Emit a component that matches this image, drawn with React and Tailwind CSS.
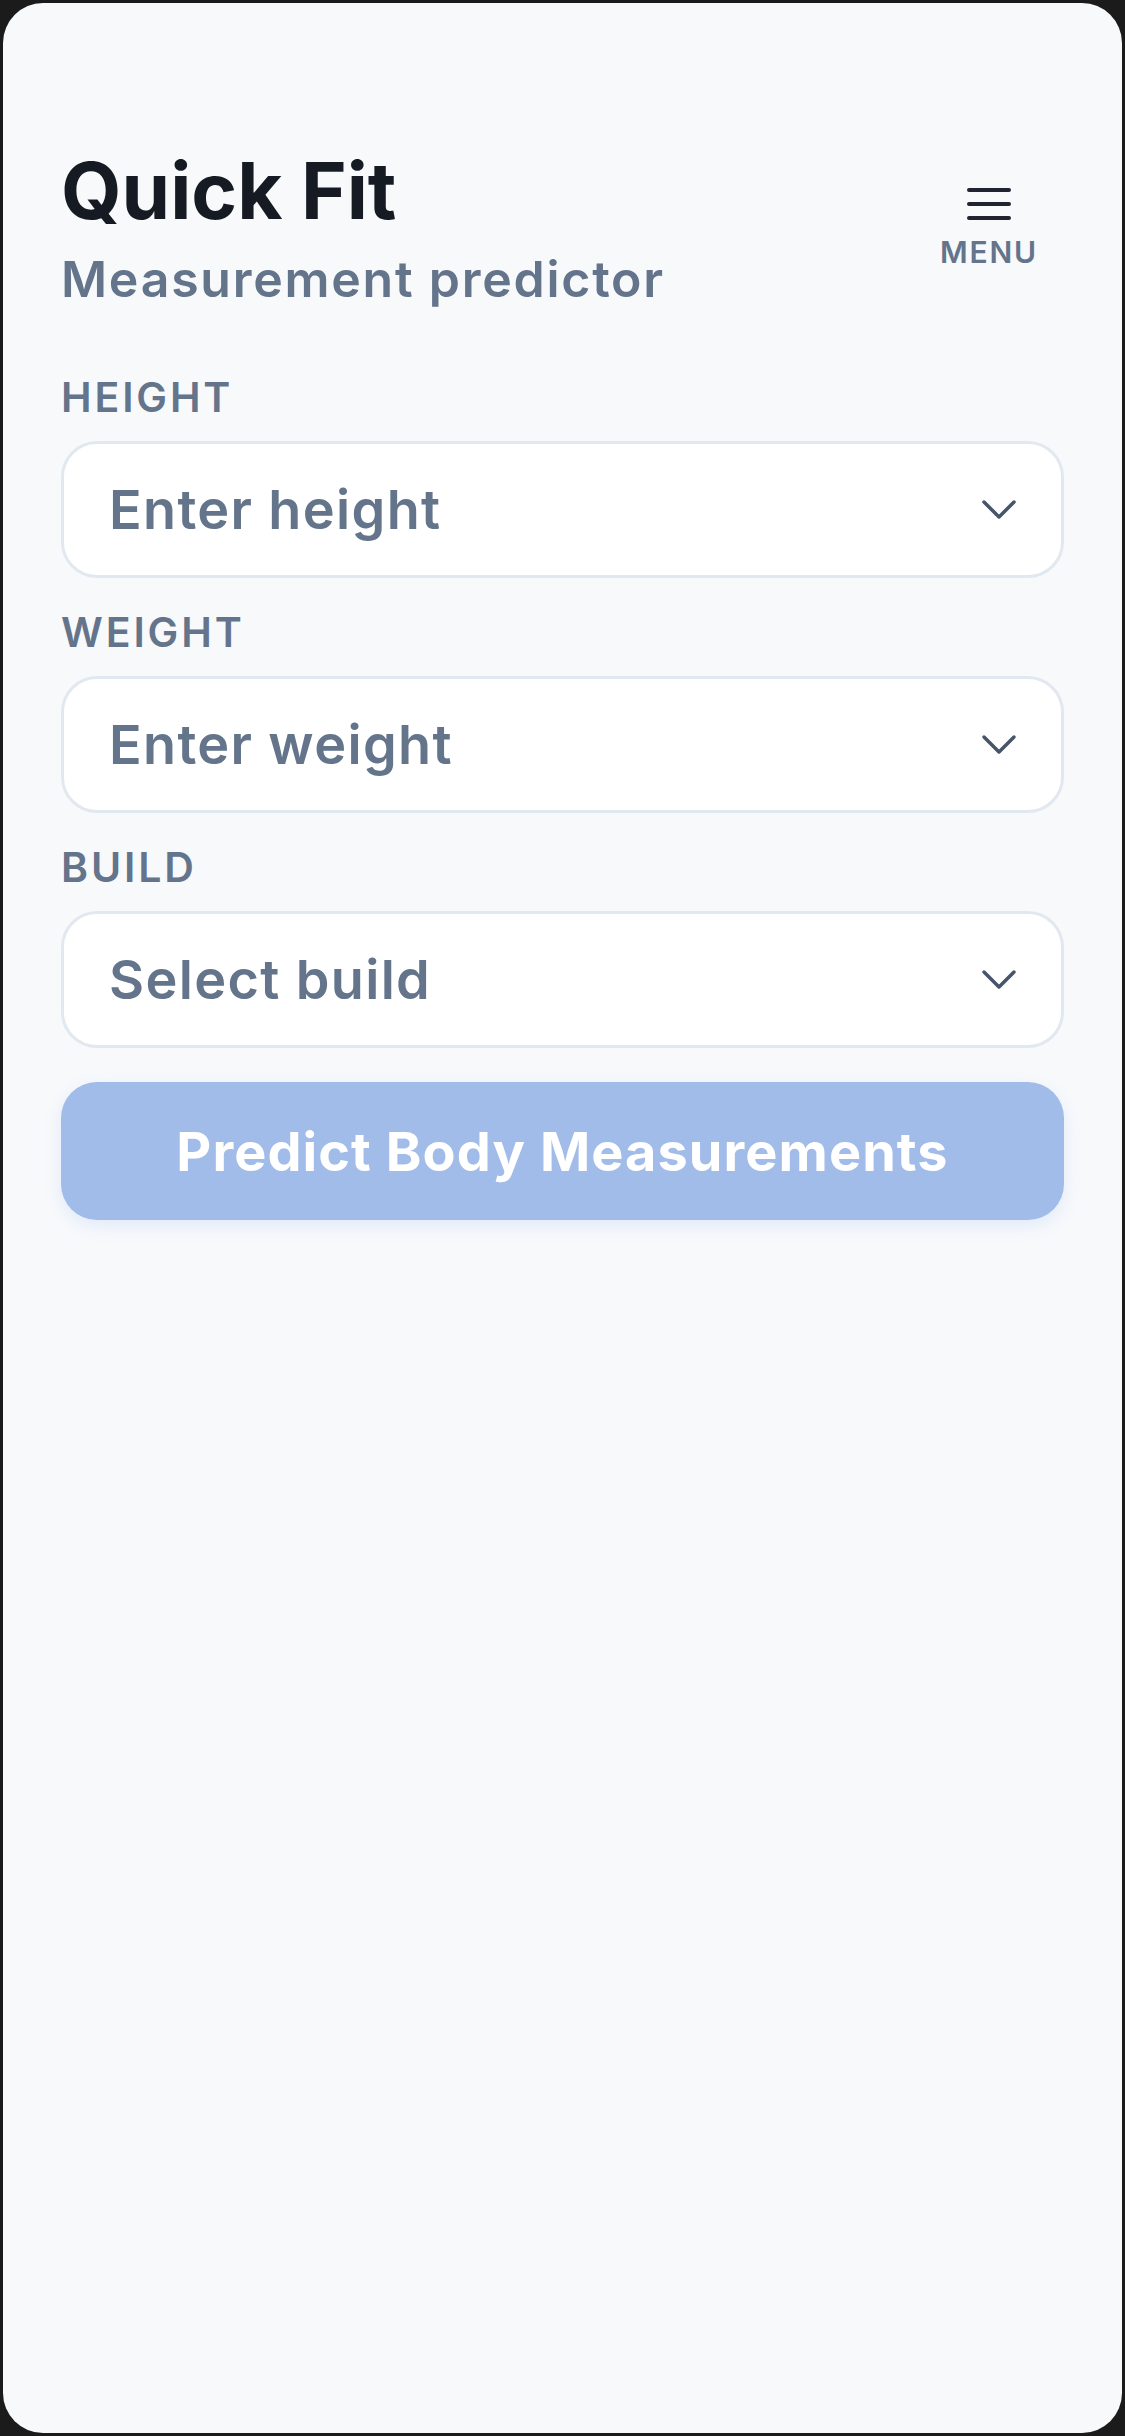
import React from "react";

const fields = [
  { label: "HEIGHT", placeholder: "Enter height" },
  { label: "WEIGHT", placeholder: "Enter weight" },
  { label: "BUILD", placeholder: "Select build" },
];

function Chevron() {
  return (
    <svg width="36" height="22" viewBox="0 0 36 22" fill="none" className="shrink-0">
      <path d="M3 3l15 15L33 3" stroke="#475569" strokeWidth="3.5" strokeLinecap="round" strokeLinejoin="round" />
    </svg>
  );
}

function MenuButton() {
  return (
    <button className="flex flex-col items-center mt-[34px] mr-[26px]">
      <svg width="46" height="36" viewBox="0 0 46 36" fill="none">
        <path d="M3 4h40M3 18h40M3 32h40" stroke="#1f2430" strokeWidth="4" strokeLinecap="round" />
      </svg>
      <span className="mt-[15px] text-[30px] leading-none font-semibold tracking-[0.06em] text-[#64748b]">MENU</span>
    </button>
  );
}

function SelectField({ label, placeholder }) {
  return (
    <div className="flex flex-col">
      <label className="text-[41px] leading-none font-semibold tracking-[0.07em] text-[#64748b]">{label}</label>
      <div className="mt-[23px] h-[137px] flex items-center justify-between bg-white border-[3px] border-[#e2e8f0] rounded-[36px] pl-[45px] pr-[44px]">
        <span className="text-[54px] font-semibold tracking-[0.025em] text-[#64748b]">{placeholder}</span>
        <Chevron />
      </div>
    </div>
  );
}

export default function App() {
  return (
    <div className="w-[1125px] h-[2436px] bg-[#1b1b1b] p-[3px]" style={{ fontFamily: "Inter, 'Noto Sans', sans-serif" }}>
      <div className="h-full rounded-[40px] bg-[#f8f9fb] px-[58px] pt-[149px]">
        <header className="flex items-start justify-between">
          <div className="flex flex-col">
            <h1 className="text-[78px] leading-none font-bold text-[#151a23]">Quick Fit</h1>
            <p className="mt-[24px] text-[50px] leading-none font-semibold tracking-[0.035em] text-[#64748b]">Measurement predictor</p>
          </div>
          <MenuButton />
        </header>

        <div className="mt-[73px] flex flex-col gap-[34px]">
          {fields.map((f) => (
            <SelectField key={f.label} {...f} />
          ))}
          <button className="h-[138px] rounded-[36px] bg-[#a1bce9] text-white text-[54px] font-bold tracking-[0.02em] shadow-[0_6px_18px_rgba(59,130,246,0.12)]">
            Predict Body Measurements
          </button>
        </div>
      </div>
    </div>
  );
}
